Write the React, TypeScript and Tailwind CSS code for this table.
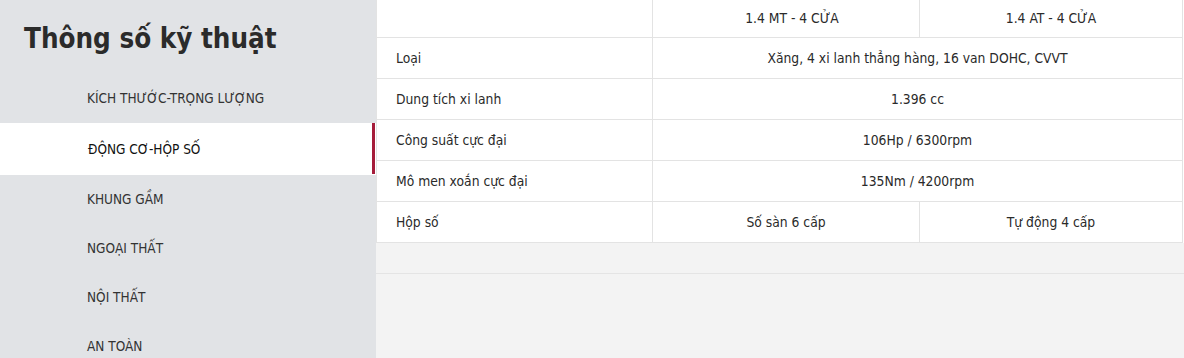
import React from "react";

const menu = [
  "KÍCH THƯỚC-TRỌNG LƯỢNG",
  "ĐỘNG CƠ-HỘP SỐ",
  "KHUNG GẦM",
  "NGOẠI THẤT",
  "NỘI THẤT",
  "AN TOÀN",
];

type Row = { label: string; values: string[] };
const rows: Row[] = [
  { label: "Loại", values: ["Xăng, 4 xi lanh thẳng hàng, 16 van DOHC, CVVT"] },
  { label: "Dung tích xi lanh", values: ["1.396 cc"] },
  { label: "Công suất cực đại", values: ["106Hp / 6300rpm"] },
  { label: "Mô men xoắn cực đại", values: ["135Nm / 4200rpm"] },
  { label: "Hộp số", values: ["Số sàn 6 cấp", "Tự động 4 cấp"] },
];

export default function App() {
  const font = { fontFamily: '"DejaVu Sans Condensed", "DejaVu Sans", sans-serif' };
  return (
    <div className="flex w-[1184px] h-[358px] overflow-hidden bg-[#f3f3f3]" style={font}>
      <aside className="w-[376px] shrink-0 bg-[#e1e3e6] flex flex-col">
        <div className="h-[74px] shrink-0 pl-[24px] pt-[20px]">
          <h1 className="text-[27.5px] leading-[36px] font-bold text-[#2b2b2b]">Thông số kỹ thuật</h1>
        </div>
        {menu.map((m, i) => {
          const active = i === 1;
          return (
            <div
              key={m}
              className={
                active
                  ? "relative shrink-0 h-[52px] bg-white flex items-center pl-[88px] text-[13.5px] text-[#111]"
                  : "shrink-0 h-[49px] flex items-center pl-[87px] text-[13.5px] text-[#333]"
              }
            >
              {m}
              {active && <span className="absolute right-[1px] top-0 bottom-[1px] w-[3px] bg-[#a51c3a]" />}
            </div>
          );
        })}
      </aside>
      <main className="flex-1 flex flex-col">
        <div className="grid grid-cols-[277px_267px_263px] bg-white text-[13.75px] text-[#2a2a2a]">
          <div className="h-[38px] border-l border-r border-b border-[#e3e3e3]" />
          <div className="h-[38px] border-r border-b border-[#e3e3e3] flex items-center justify-center pl-[12px]">1.4 MT - 4 CỬA</div>
          <div className="h-[38px] border-r border-b border-[#e3e3e3] flex items-center justify-center">1.4 AT - 4 CỬA</div>
          {rows.map((r) => (
            <React.Fragment key={r.label}>
              <div className="h-[41px] border-l border-r border-b border-[#e3e3e3] flex items-center pl-[19px]">{r.label}</div>
              {r.values.length === 1 ? (
                <div className="col-span-2 h-[41px] border-r border-b border-[#e3e3e3] flex items-center justify-center">{r.values[0]}</div>
              ) : (
                r.values.map((v) => (
                  <div key={v} className="h-[41px] border-r border-b border-[#e3e3e3] flex items-center justify-center">{v}</div>
                ))
              )}
            </React.Fragment>
          ))}
        </div>
        <div className="h-[31px] shrink-0 border-b border-[#e4e4e4] bg-[#f3f3f3]" />
        <div className="flex-1 bg-[#f3f3f3]" />
      </main>
    </div>
  );
}
